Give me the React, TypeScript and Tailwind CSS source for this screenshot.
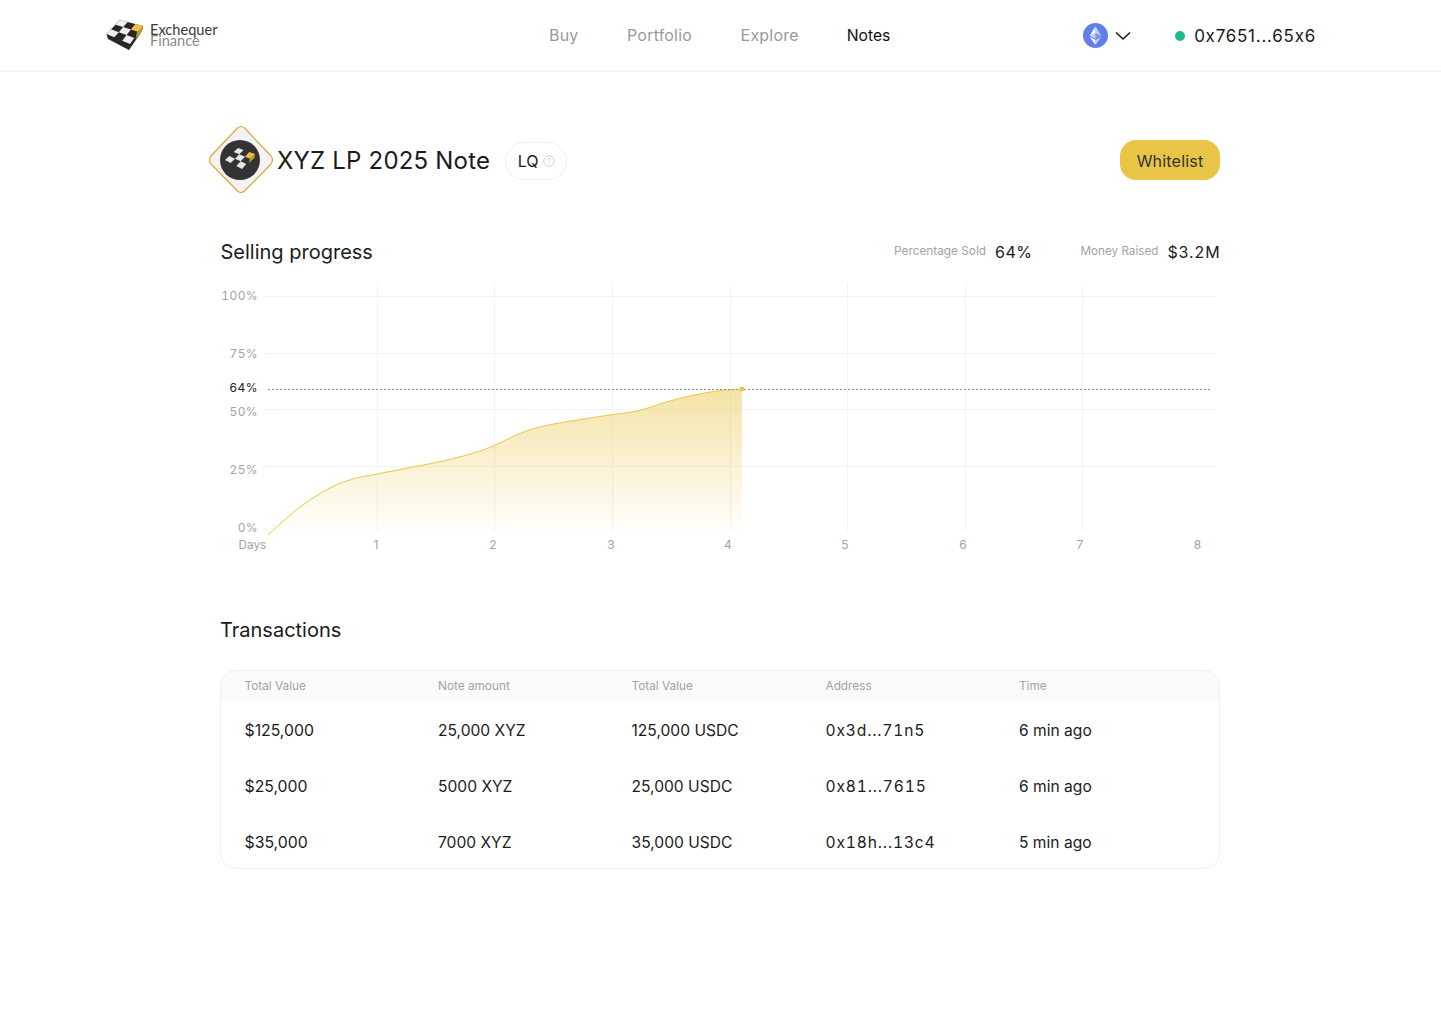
type Pt = [number, number];

const points: Pt[] = [
  [48, 255], [80, 227], [110, 208], [133, 199], [157, 194], [223, 181], [257, 172], [273, 166], [290, 158],
  [305, 151.5], [322, 146.5], [345, 142], [390, 135], [417, 131], [437, 125], [457, 119], [477, 114.5],
  [497, 111], [522, 109],
];

// catmull-rom through the traced points, x and y are relative to the chart box
const smoothPath = (pts: Pt[]) => {
  let d = `M${pts[0][0]} ${pts[0][1]}`;
  for (let i = 0; i < pts.length - 1; i++) {
    const p0 = pts[Math.max(i - 1, 0)];
    const p1 = pts[i];
    const p2 = pts[i + 1];
    const p3 = pts[Math.min(i + 2, pts.length - 1)];
    const c1x = p1[0] + (p2[0] - p0[0]) / 6;
    const c1y = p1[1] + (p2[1] - p0[1]) / 6;
    const c2x = p2[0] - (p3[0] - p1[0]) / 6;
    const c2y = p2[1] - (p3[1] - p1[1]) / 6;
    d += ` C${c1x.toFixed(1)} ${c1y.toFixed(1)} ${c2x.toFixed(1)} ${c2y.toFixed(1)} ${p2[0]} ${p2[1]}`;
  }
  return d;
};

const curve = smoothPath(points);

// 3x3 checker on a skewed board, l/t/r/b are the corners of its top face
const boardCell = (l: Pt, t: Pt, r: Pt, b: Pt, i: number, j: number) => {
  const at = (u: number, v: number) => {
    const x = (1 - u) * (1 - v) * l[0] + u * (1 - v) * t[0] + u * v * r[0] + (1 - u) * v * b[0];
    const y = (1 - u) * (1 - v) * l[1] + u * (1 - v) * t[1] + u * v * r[1] + (1 - u) * v * b[1];
    return `${x.toFixed(1)},${y.toFixed(1)}`;
  };
  return [at(i / 3, j / 3), at((i + 1) / 3, j / 3), at((i + 1) / 3, (j + 1) / 3), at(i / 3, (j + 1) / 3)].join(" ");
};

const whiteCells: [number, number][] = [[0, 0], [1, 1], [2, 0], [0, 2]];

const transactions = [
  { value: "$125,000", amount: "25,000 XYZ", total: "125,000 USDC", address: "0x3d...71n5", time: "6 min ago" },
  { value: "$25,000", amount: "5000 XYZ", total: "25,000 USDC", address: "0x81...7615", time: "6 min ago" },
  { value: "$35,000", amount: "7000 XYZ", total: "35,000 USDC", address: "0x18h...13c4", time: "5 min ago" },
];

const Logo = () => {
  const l: Pt = [0.5, 15];
  const t: Pt = [14, 1];
  const r: Pt = [37, 7];
  const b: Pt = [24, 25];
  return (
    <div className="flex items-center gap-[6px]">
      <svg viewBox="0 0 38 32" className="h-[32px] w-[38px]">
        <path d="M0.5 15 L14 1 L37 7 L36 12 L23 31 L2 20 Z" fill="#262626" />
        {whiteCells.map(([i, j]) => (
          <polygon key={`${i}${j}`} points={boardCell(l, t, r, b, i, j)} fill="#efefef" />
        ))}
        <polygon points={boardCell(l, t, r, b, 2, 2)} fill="#eec13f" />
        <path d="M37 7 L36 12 L29.5 20 L31 13 Z" fill="#c49a2d" />
      </svg>
      <div className="font-['Lato',sans-serif] text-[14.6px] leading-[11px]">
        <div className="text-[#3a3a3a]">Exchequer</div>
        <div className="text-[#8a8a8a]">Finance</div>
      </div>
    </div>
  );
};

const EthBadge = () => (
  <svg viewBox="0 0 24 24" className="h-[25px] w-[25px]">
    <circle cx="12" cy="12" r="12" fill="#627eea" />
    <path d="M12 3 L12 9.6 L17.6 12.2 Z" fill="#ffffff" fillOpacity="0.6" />
    <path d="M12 3 L6.4 12.2 L12 9.6 Z" fill="#ffffff" />
    <path d="M12 16.4 L12 21 L17.6 13.2 Z" fill="#ffffff" fillOpacity="0.6" />
    <path d="M12 16.4 L6.4 13.2 L12 21 Z" fill="#ffffff" />
    <path d="M12 15.3 L17.6 12.2 L12 9.6 Z" fill="#ffffff" fillOpacity="0.2" />
    <path d="M6.4 12.2 L12 15.3 L12 9.6 Z" fill="#ffffff" fillOpacity="0.6" />
  </svg>
);

const NoteBadge = () => {
  const l: Pt = [17, 35];
  const t: Pt = [30, 23];
  const r: Pt = [47, 29];
  const b: Pt = [34, 44];
  return (
    <svg viewBox="0 0 66 70" className="h-[70px] w-[66px] shrink-0">
      <path
        d="M29.5 3 L3 31 Q0 35 3 39 L29.5 66 Q33 69 36.5 66 L63 39 Q66 35 63 31 L36.5 3 Q33 0 29.5 3 Z"
        fill="#f3f3f3"
        stroke="#e0a63c"
        strokeWidth="1.2"
      />
      <circle cx="32" cy="35" r="20" fill="#333235" />
      {whiteCells.map(([i, j]) => (
        <polygon key={`${i}${j}`} points={boardCell(l, t, r, b, i, j)} fill="#e6e6e6" />
      ))}
      <polygon points={boardCell(l, t, r, b, 2, 2)} fill="#eec13f" />
      <path d="M47 29 L46.5 33 L41 38 L42 32.5 Z" fill="#c49a2d" />
    </svg>
  );
};

const SellingChart = () => (
  <svg viewBox="0 0 1000 276" className="mt-[13px] h-[276px] w-[1000px] font-['Inter',sans-serif]">
    <defs>
      <linearGradient id="areaFill" x1="0" y1="0" x2="0" y2="1">
        <stop offset="0" stopColor="#e9c545" stopOpacity="0.48" />
        <stop offset="1" stopColor="#e9c545" stopOpacity="0" />
      </linearGradient>
    </defs>
    {[16, 73, 129, 186].map((y) => (
      <line key={y} x1="45" x2="996" y1={y + 0.5} y2={y + 0.5} stroke="#f3f3f3" />
    ))}
    {[157, 274, 392, 510, 627, 745, 862].map((x) => (
      <line key={x} x1={x + 0.5} x2={x + 0.5} y1="3" y2="252" stroke="#f3f3f3" />
    ))}
    <path d={`${curve} L522 250 L48 250 Z`} fill="url(#areaFill)" />
    <path d={curve} fill="none" stroke="#ecc648" strokeWidth="1" />
    <line x1="48" x2="990.5" y1="109.5" y2="109.5" stroke="#8e8e8e" strokeDasharray="2 2" strokeWidth="1" />
    <circle cx="522" cy="109" r="2.5" fill="#ecc648" />
    {[
      ["100%", 20],
      ["75%", 78],
      ["50%", 136],
      ["25%", 194],
      ["0%", 252],
    ].map(([label, y]) => (
      <text key={label} x="38" y={y} textAnchor="end" fontSize="12" letterSpacing="0.4" className="tabular-nums" fill="#a3a3a3">
        {label}
      </text>
    ))}
    <text x="38" y="112" textAnchor="end" fontSize="12" letterSpacing="0.5" fill="#222222">
      64%
    </text>
    <text x="18.5" y="269" fontSize="11.8" fill="#a3a3a3">
      Days
    </text>
    {[
      ["1", 156],
      ["2", 273],
      ["3", 391],
      ["4", 508],
      ["5", 625],
      ["6", 743],
      ["7", 860],
      ["8", 977.5],
    ].map(([label, x]) => (
      <text key={label} x={x} y="269" textAnchor="middle" fontSize="12" fill="#a3a3a3">
        {label}
      </text>
    ))}
  </svg>
);

export default function App() {
  return (
    <div className="min-h-[1025px] bg-white font-['Inter',sans-serif] text-[#1b1b1b]">
      <header className="flex h-[72px] items-center border-b-2 border-[#f4f4f4] pl-[106px] pr-[125px] pt-[1px]">
        <div className="mt-[-2px] w-[443px]">
          <Logo />
        </div>
        <nav className="flex flex-1 items-baseline gap-[48.5px] text-[16px] tracking-[0.2px] text-[#9a9a9a]">
          <a>Buy</a>
          <a>Portfolio</a>
          <a>Explore</a>
          <a className="ml-[-0.5px] text-[15.7px] tracking-normal text-[#111111]">Notes</a>
        </nav>
        <div className="flex items-center">
          <EthBadge />
          <svg viewBox="0 0 16 10" className="ml-[7px] h-[10px] w-[16px]" fill="none" stroke="#1b1b1b" strokeWidth="1.6">
            <path d="M1 1.5 L8 8 L15 1.5" />
          </svg>
          <span className="ml-[44px] h-[10px] w-[10px] rounded-full bg-[#1fbc8b]" />
          <span className="ml-[9px] pt-[2px] text-[17px] tracking-[0.75px]">0x7651...65x6</span>
        </div>
      </header>

      <main className="ml-[220px] w-[1000px] pt-[53px]">
        <div className="flex items-center justify-between">
          <div className="ml-[-12px] flex items-center">
            <NoteBadge />
            <h1 className="ml-[3px] mt-[1px] text-[24px] leading-[30px] tracking-[0.2px]">XYZ LP 2025 Note</h1>
            <div className="ml-[15px] mt-[1px] flex h-[38px] items-center gap-[4px] rounded-full border border-[#f0f0f0] px-[11.5px] text-[16px]">
              LQ
              <svg viewBox="0 0 12 12" className="h-[12px] w-[12px]" fill="none" stroke="#c4c4c4" strokeWidth="0.8">
                <circle cx="6" cy="6" r="5.3" />
                <path d="M4.5 4.8 Q4.6 3.4 6 3.4 Q7.5 3.4 7.5 4.7 Q7.5 5.5 6.6 5.9 Q6 6.2 6 7" />
                <path d="M6 8 L6 8.8" />
              </svg>
            </div>
          </div>
          <button className="flex h-[40px] w-[100px] items-center justify-center rounded-[16px] bg-[#e8c546] pt-[1px] text-[16px] tracking-[0.2px] text-[#333333]">
            Whitelist
          </button>
        </div>

        <div className="mt-[42px] flex items-center justify-between">
          <h2 className="pl-[0.5px] text-[20px] leading-[30px]">Selling progress</h2>
          <div className="mr-[-0.5px] flex items-center">
            <span className="text-[11.8px] text-[#a3a3a3]">Percentage Sold</span>
            <span className="ml-[9px] text-[16px] tracking-[0.5px]">64%</span>
            <span className="ml-[48px] text-[11.7px] text-[#a3a3a3]">Money Raised</span>
            <span className="ml-[9px] text-[16px] tracking-[0.9px]">$3.2M</span>
          </div>
        </div>

        <SellingChart />

        <h2 className="mt-[59px] text-[20px] leading-[30px]">Transactions</h2>

        <div className="mt-[25px] h-[199px] overflow-hidden rounded-[16px] border border-[#f0f0f0]">
          <div className="grid h-[30px] grid-cols-[193.5px_193.5px_194px_193.5px_1fr] items-center bg-[#fafafa] pl-[23.5px] pt-[1px] text-[11.8px] text-[#a3a3a3]">
            <span>Total Value</span>
            <span>Note amount</span>
            <span>Total Value</span>
            <span>Address</span>
            <span>Time</span>
          </div>
          <div className="pt-[2px]">
            {transactions.map((tx) => (
              <div
                key={tx.address}
                className="grid h-[56px] grid-cols-[193.5px_193.5px_194px_193.5px_1fr] items-center pl-[23.5px] text-[15.6px]"
              >
                <span className="mt-[-1px] text-[15.8px]">{tx.value}</span>
                <span>{tx.amount}</span>
                <span>{tx.total}</span>
                <span className="tabular-nums tracking-[0.85px]">{tx.address}</span>
                <span>{tx.time}</span>
              </div>
            ))}
          </div>
        </div>
      </main>
    </div>
  );
}
